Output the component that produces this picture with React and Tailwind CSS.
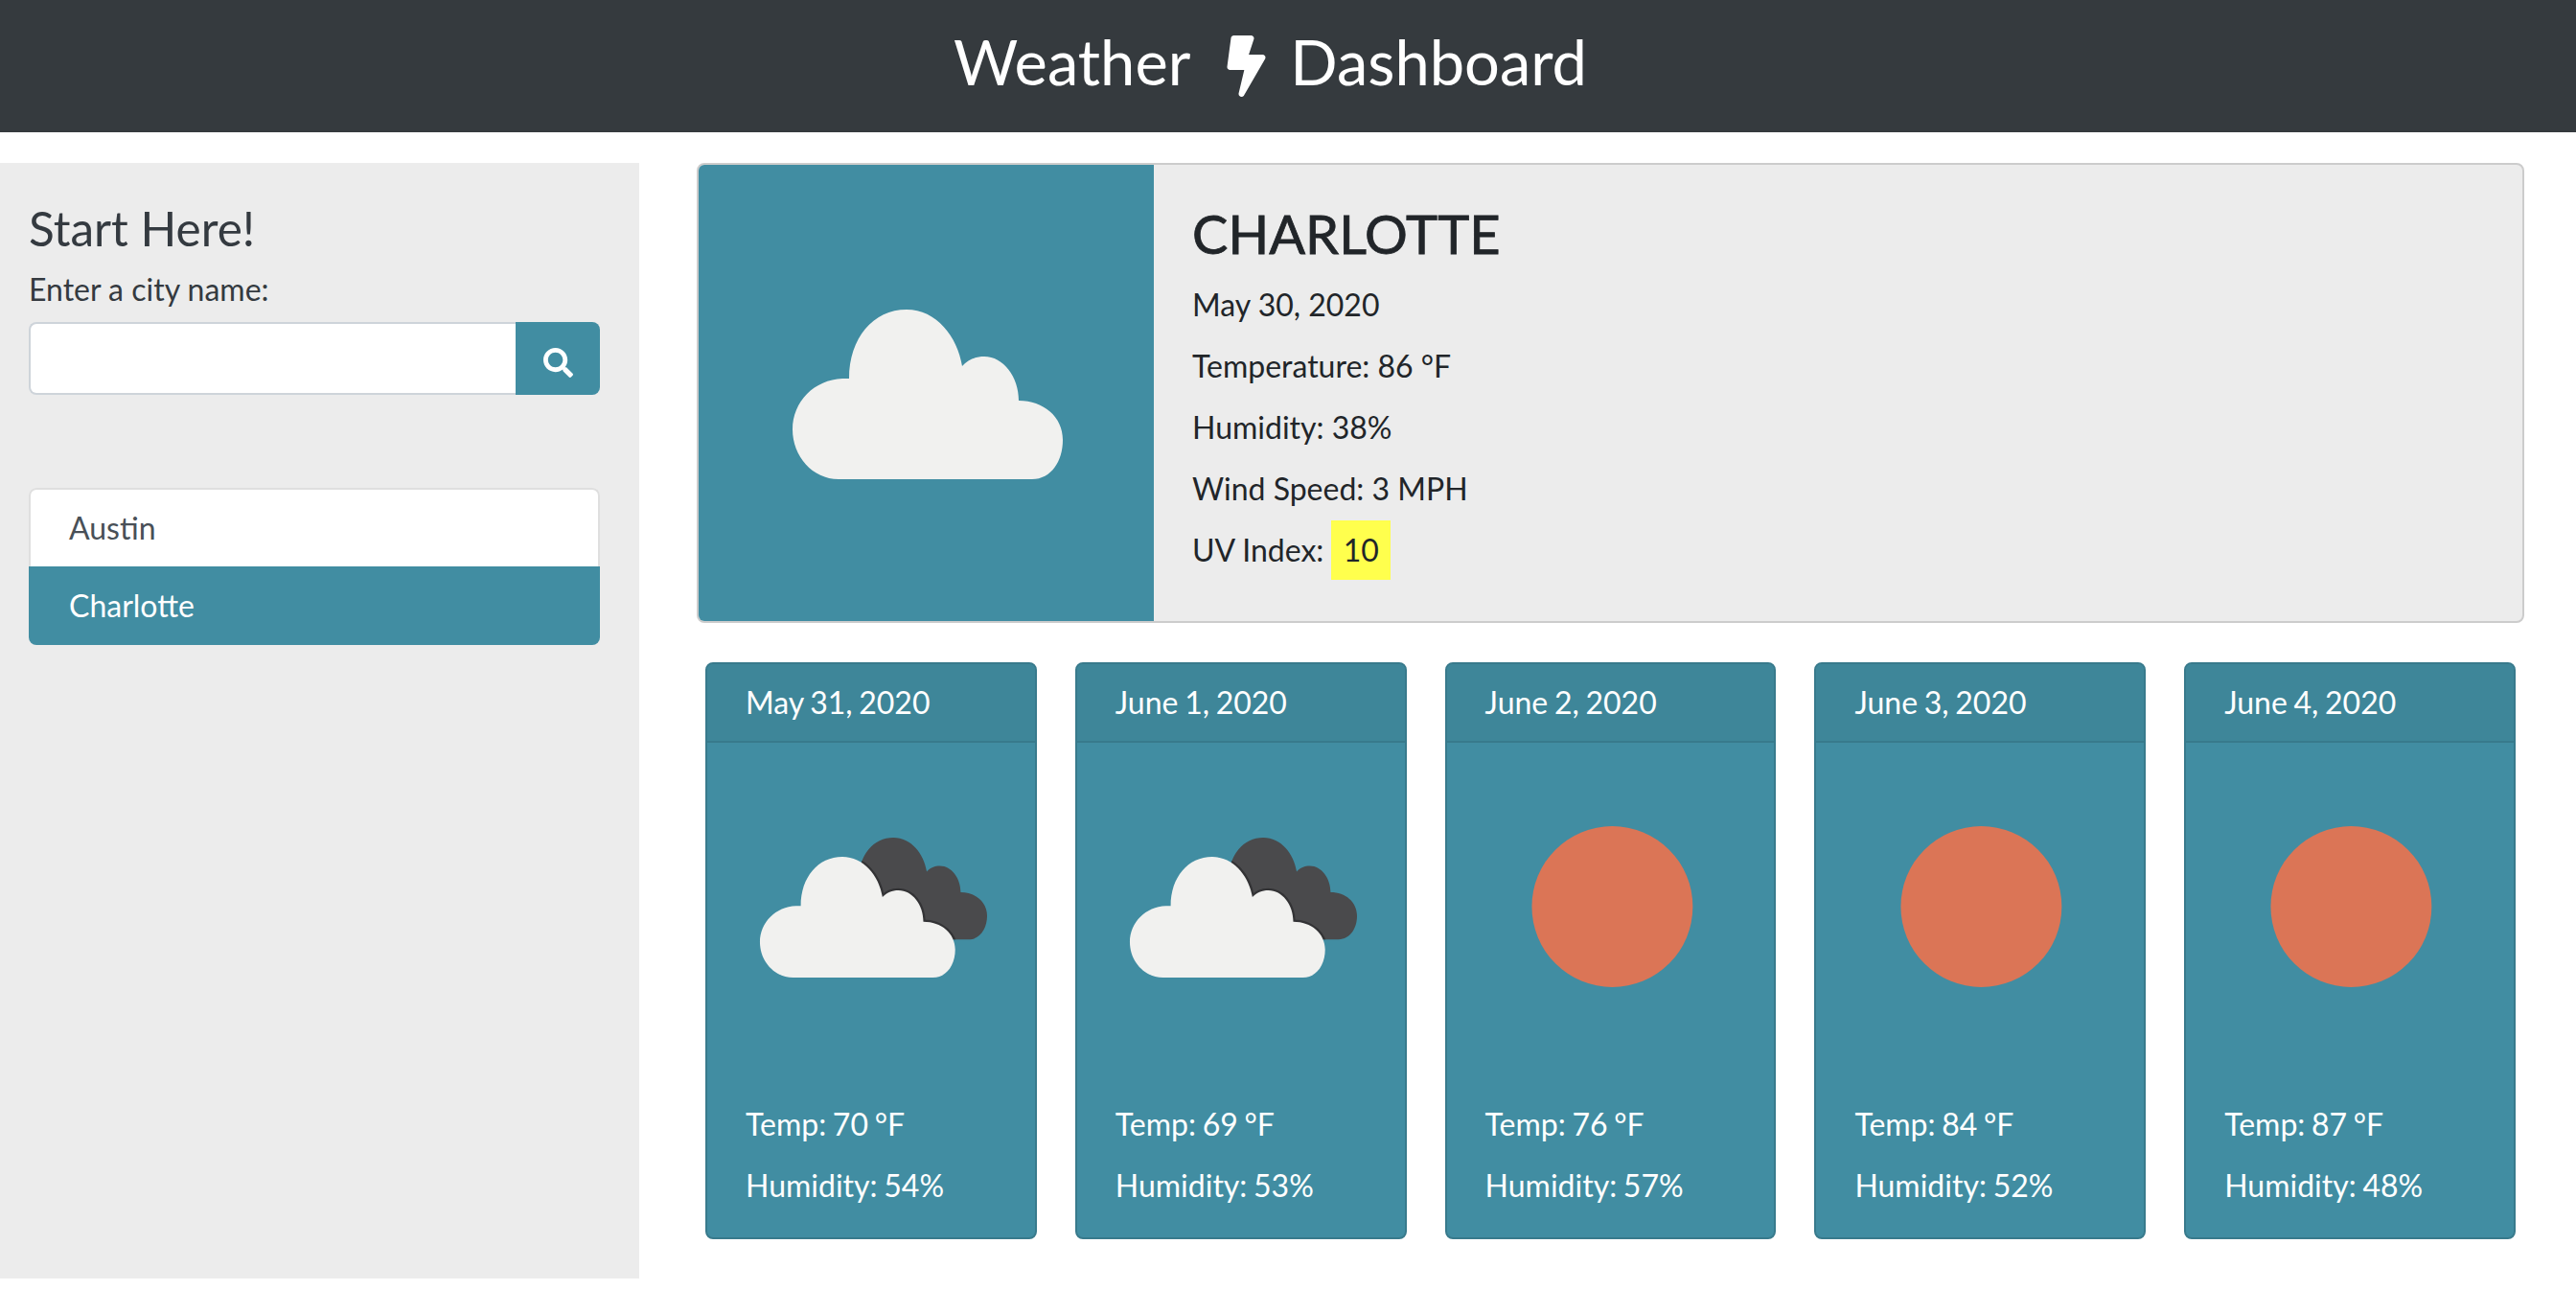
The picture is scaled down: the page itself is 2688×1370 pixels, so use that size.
import { FaBolt, FaSearch } from 'react-icons/fa'

const CLOUD =
  'M48 177C21 177 0 153 0 125C0 96 23 73 52 72L59 72C59 30 84 0 119 0C150 0 172 28 177 59C183 52 191 49 200 49C220 49 236 70 236 95C262 95 282 112 282 136C282 158 270 177 250 177Z'

const forecast = [
  { date: 'May 31, 2020', temp: 70, humidity: 54, icon: 'clouds' },
  { date: 'June 1, 2020', temp: 69, humidity: 53, icon: 'clouds' },
  { date: 'June 2, 2020', temp: 76, humidity: 57, icon: 'sun' },
  { date: 'June 3, 2020', temp: 84, humidity: 52, icon: 'sun' },
  { date: 'June 4, 2020', temp: 87, humidity: 48, icon: 'sun' },
]

const currentLines = ['May 30, 2020', 'Temperature: 86 °F', 'Humidity: 38%', 'Wind Speed: 3 MPH']

function ForecastIcon({ type, id }) {
  if (type === 'sun') {
    return (
      <svg viewBox="0 0 342 342" className="block w-full h-[342px]">
        <circle cx="172.5" cy="171" r="84" fill="#db7556" />
      </svg>
    )
  }
  // white cloud sits in front of a smaller dark one
  return (
    <svg viewBox="0 0 342 342" className="block w-full h-[342px]">
      <defs>
        <clipPath id={id}>
          <path d={CLOUD} transform="translate(123 99) scale(0.6)" />
        </clipPath>
      </defs>
      <path d={CLOUD} fill="#4a4a4c" transform="translate(123 99) scale(0.6)" />
      <g clipPath={`url(#${id})`}>
        <path
          d={CLOUD}
          fill="none"
          stroke="#333335"
          strokeWidth="6"
          transform="translate(55 119) scale(0.723 0.712)"
        />
      </g>
      <path d={CLOUD} fill="#f1f1ef" transform="translate(55 119) scale(0.723 0.712)" />
    </svg>
  )
}

function ForecastCard({ day, index }) {
  return (
    <div className="flex flex-col h-[602px] bg-[#418da2] border-2 border-[#387a8c] rounded-lg text-white overflow-hidden [word-spacing:-1.5px]">
      <div className="h-[82px] shrink-0 flex items-center px-[40px] bg-[#3e8699] border-b-2 border-[#387a8c]">
        {day.date}
      </div>
      <ForecastIcon type={day.icon} id={`dark-cloud-${index}`} />
      <div className="px-[40px] pt-[32px]">
        <p className="leading-[48px] mb-[16px]">Temp: {day.temp} °F</p>
        <p className="leading-[48px]">Humidity: {day.humidity}%</p>
      </div>
    </div>
  )
}

export default function App() {
  return (
    <div className="w-[2688px] h-[1370px] bg-white text-[32px] text-[#212529] overflow-hidden font-['Lato','Open_Sans',sans-serif]">
      <nav className="h-[138px] bg-[#353a3e] flex items-center justify-center pr-[37px] pb-[10px] text-white text-[65px] leading-none">
        <span>Weather</span>
        <FaBolt className="w-[41px] h-[64px] ml-[38px] mr-[25px] mt-[10px]" />
        <span>Dashboard</span>
      </nav>

      <div className="flex mt-[32px]">
        <aside className="w-[667px] h-[1164px] shrink-0 bg-[#ececec] pl-[30px] pr-[41px] pt-[40px] text-[#343a40]">
          <h2 className="text-[49.5px] leading-[56px]">Start Here!</h2>
          <label className="block text-[32px] leading-[48px] mt-[12px]">Enter a city name:</label>
          <div className="flex h-[76px] mt-[10px]">
            <input
              type="text"
              className="flex-1 min-w-0 bg-white border-2 border-[#ced4da] border-r-0 rounded-l-lg outline-none"
            />
            <button className="w-[88px] bg-[#418da2] rounded-r-lg flex items-center justify-center pt-[8px] text-white">
              <FaSearch className="w-[31px] h-[31px]" />
            </button>
          </div>
          <ul className="mt-[97px] rounded-lg overflow-hidden">
            <li className="h-[82px] flex items-center px-[40px] bg-white text-[#495057] border-2 border-b-0 border-[#dfdfdf] rounded-t-lg">
              Austin
            </li>
            <li className="h-[82px] flex items-center px-[42px] bg-[#418da2] text-white">Charlotte</li>
          </ul>
        </aside>

        <main className="flex-1 min-w-0 pl-[60px] pr-[54px]">
          <section className="flex h-[480px] bg-[#ececec] border-2 border-[#cccccc] rounded-lg overflow-hidden">
            <div className="w-[475px] shrink-0 bg-[#418da2] flex items-center justify-center pl-[3px] pt-[2px]">
              <svg viewBox="0 0 282 177" className="w-[282px] h-[177px]">
                <path d={CLOUD} fill="#f1f1ef" />
              </svg>
            </div>
            <div className="flex-1 pl-[40px] pt-[40px]">
              <h1 className="text-[56px] leading-[64px] mb-[18px] [-webkit-text-stroke:0.8px_#212529]">CHARLOTTE</h1>
              {currentLines.map(line => (
                <p key={line} className="leading-[48px] mb-[16px]">
                  {line}
                </p>
              ))}
              <div className="flex items-center h-[48px]">
                <span>UV Index:</span>
                <span className="ml-[8px] flex items-center justify-center w-[62px] h-[62px] bg-[#ffff4d]">10</span>
              </div>
            </div>
          </section>

          <div className="grid grid-cols-5 gap-[40px] mt-[41px] pl-[9px] pr-[9px]">
            {forecast.map((day, i) => (
              <ForecastCard key={day.date} day={day} index={i} />
            ))}
          </div>
        </main>
      </div>
    </div>
  )
}
